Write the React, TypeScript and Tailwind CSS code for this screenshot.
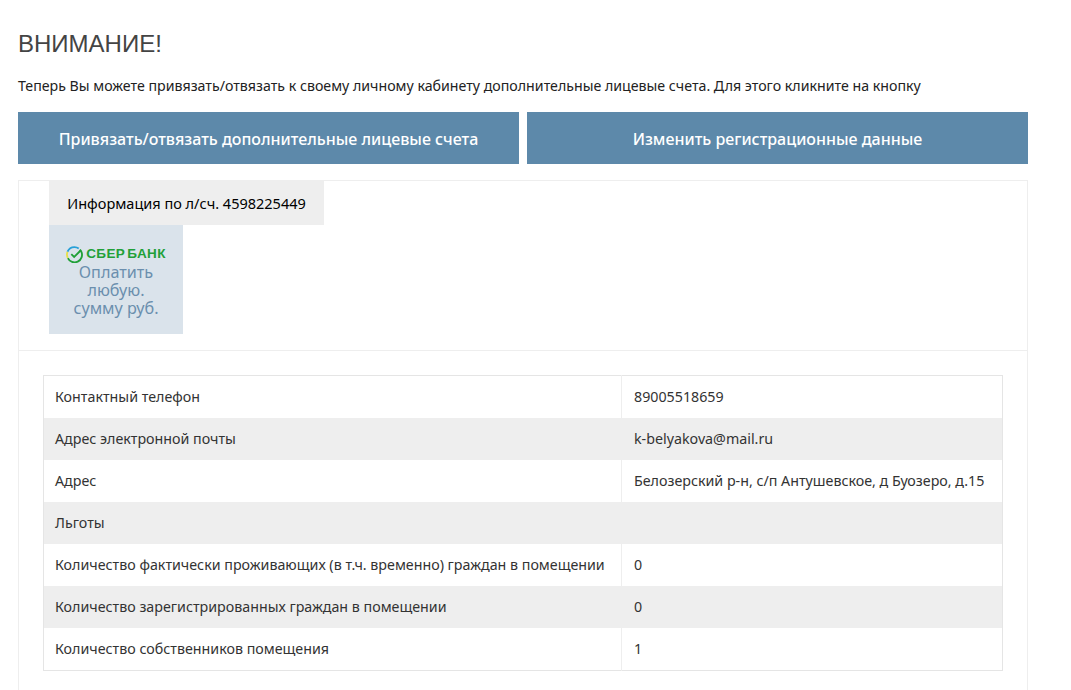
const font = "font-['Noto_Sans','Roboto',sans-serif]";

const rows: [string, string][] = [
  ["Контактный телефон", "89005518659"],
  ["Адрес электронной почты", "k-belyakova@mail.ru"],
  ["Адрес", "Белозерский р-н, с/п Антушевское, д Буозеро, д.15"],
  ["Льготы", ""],
  ["Количество фактически проживающих (в т.ч. временно) граждан в помещении", "0"],
  ["Количество зарегистрированных граждан в помещении", "0"],
  ["Количество собственников помещения", "1"],
];

function SberLogo() {
  return (
    <div className="flex h-[18px] items-center justify-center gap-[3px]">
      <svg width="17" height="17" viewBox="0 0 24 24" fill="none">
        <path d="M19.6 5.2A10.5 10.5 0 0 1 21.6 8a10.5 10.5 0 1 1-19 9" stroke="#21a038" strokeWidth="2.6" />
        <path d="M2.6 17a10.5 10.5 0 0 1-.4-9" stroke="#e6e04a" strokeWidth="2.6" />
        <path d="M2.2 8A10.5 10.5 0 0 1 12 1.5a10.5 10.5 0 0 1 6 2" stroke="#27a0d8" strokeWidth="2.6" />
        <path d="M7.5 11.5l4 4L21 6" stroke="#21a038" strokeWidth="2.6" />
      </svg>
      <span className="font-['Liberation_Sans',sans-serif] text-[13.5px] font-bold leading-none tracking-[0.4px] [word-spacing:-2px] text-[#21a038]">СБЕР БАНК</span>
    </div>
  );
}

export default function App() {
  return (
    <div className={`${font} h-[690px] overflow-hidden bg-white px-[18px] text-[#333333]`}>
      <div className="w-[1010px]">
        <h1 className="pt-[30px] font-['Liberation_Sans',sans-serif] text-[24px] leading-[28px] text-[#444444]">ВНИМАНИЕ!</h1>
        <p className="mt-[18px] text-[14.2px] leading-[20px] text-[#222222]">
          Теперь Вы можете привязать/отвязать к своему личному кабинету дополнительные лицевые счета. Для этого кликните на кнопку
        </p>
        <div className="mt-[16px] flex gap-2">
          <a className="flex h-[52px] w-[501px] items-center justify-center bg-[#5d89aa] pt-[2px] text-[16px] font-medium text-white">Привязать/отвязать дополнительные лицевые счета</a>
          <a className="flex h-[52px] w-[501px] items-center justify-center bg-[#5d89aa] pt-[2px] text-[16px] font-medium text-white">Изменить регистрационные данные</a>
        </div>
        <div className="mt-4 h-[600px] border border-[#eeeeee]">
          <div className="h-[170px] border-b border-[#eeeeee] pl-[30px]">
            <div className="flex h-[44px] w-[275px] items-center justify-center bg-[#eeeeee] pt-[2px] text-[14.5px] text-black">Информация по л/сч. 4598225449</div>
            <div className="flex h-[109px] w-[134px] flex-col items-center bg-[#dae3eb] pt-[20px]">
              <SberLogo />
              <div className="text-center text-[16.2px] leading-[18px] text-[#6b8fae]">Оплатить<br />любую.<br />сумму руб.</div>
            </div>
          </div>
          <div className="px-6 pt-6">
            <table className="w-[960px] table-fixed border-collapse border border-[#e5e5e5] text-[14.25px] text-[#333333]">
              <tbody>
                {rows.map(([a, b], i) => (
                  <tr key={a} className={`${i === rows.length - 1 ? "h-[43px]" : "h-[42px]"} ${i % 2 === 1 ? "bg-[#eeeeee]" : "bg-white"}`}>
                    <td className="w-[578px] border-r border-[#eeeeee] pl-[11px] pr-0">{a}</td>
                    <td className="pl-3">{b}</td>
                  </tr>
                ))}
              </tbody>
            </table>
          </div>
        </div>
      </div>
    </div>
  );
}
